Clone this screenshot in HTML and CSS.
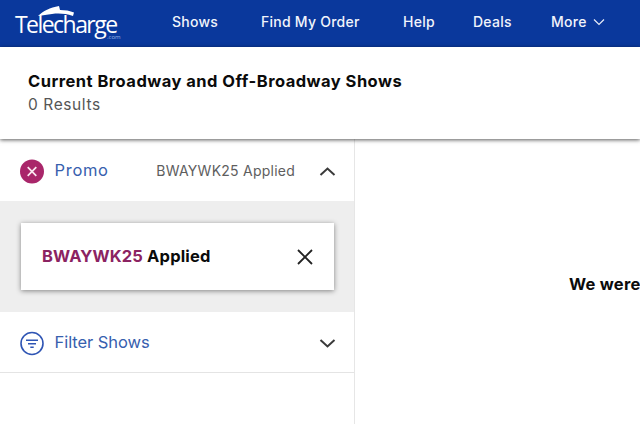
FILE: index.html
```html
<!DOCTYPE html>
<html lang="en">
<head>
<meta charset="utf-8">
<title>Telecharge</title>
<link rel="stylesheet" href="styles.css">
</head>
<body>
<header class="nav">
  <a class="logo">
    <svg class="logo-arc" width="36" height="11" viewBox="0 0 36 11"><path d="M0 10C5 5 12 1.500 21 0l1 4c5 0 10 .8 14 2.500l-1 3.500C27 7.500 21 7 14 8 9 8.500 5 9.500 0 10Z" fill="#fff"/></svg>
    <span class="logo-word">Telecharge</span>
    <span class="logo-com">.com</span>
  </a>
  <nav class="links">
    <span class="link l1">Shows</span>
    <span class="link l2">Find My Order</span>
    <span class="link l3">Help</span>
    <span class="link l4">Deals</span>
    <span class="link l5">More
      <svg width="12" height="8" viewBox="0 0 12 8"><path d="M1 1.500 6 6.500 11 1.500" fill="none" stroke="#e8edf8" stroke-width="1.200"/></svg>
    </span>
  </nav>
</header>
<section class="summary">
  <h1 class="title">Current Broadway and Off-Broadway Shows</h1>
  <p class="count">0 Results</p>
</section>
<div class="content">
  <aside class="side">
    <div class="row">
      <svg class="row-icon" width="25" height="25" viewBox="0 0 25 25"><circle cx="12" cy="12.500" r="12" fill="#a9266a"/><path d="M7.700 8.200 16.300 16.800M16.300 8.200 7.700 16.800" stroke="#fbe9f1" stroke-width="1.700" fill="none"/></svg>
      <span class="row-label label-promo">Promo</span>
      <span class="row-status">BWAYWK25 Applied</span>
      <svg class="chev" width="17" height="11" viewBox="0 0 17 11"><path d="M1.500 9 8.500 2.500 15.500 9" fill="none" stroke="#3a3a3a" stroke-width="2"/></svg>
    </div>
    <div class="panel">
      <div class="card">
        <span class="card-text"><span class="code">BWAYWK25</span> Applied</span>
        <svg width="16" height="16" viewBox="0 0 16 16"><path d="M1 1 15 15M15 1 1 15" stroke="#222" stroke-width="1.800" fill="none"/></svg>
      </div>
    </div>
    <div class="row row-line">
      <svg class="row-icon" width="25" height="25" viewBox="0 0 25 25"><circle cx="12" cy="12.500" r="11" fill="none" stroke="#2f55b4" stroke-width="1.600"/><path d="M6 9.300H18M8 12.800H16M10.300 16.300H13.700" stroke="#2f55b4" stroke-width="1.500" fill="none"/></svg>
      <span class="row-label label-filter">Filter Shows</span>
      <svg class="chev chev-end" width="17" height="11" viewBox="0 0 17 11"><path d="M1.500 2 8.500 8.500 15.500 2" fill="none" stroke="#3a3a3a" stroke-width="2"/></svg>
    </div>
  </aside>
  <main class="main">
    <p class="notice">We were unable to find any shows</p>
  </main>
</div>
</body>
</html>
```
FILE: styles.css
```css
* { box-sizing: border-box; }
html, body { margin: 0; height: 100%; overflow: hidden; background: #fff; }
body { font-family: Inter, "Open Sans", sans-serif; width: 640px; height: 424px; display: flex; flex-direction: column; }

.nav { height: 47px; flex: none; background: #0a389c; display: flex; align-items: center; color: #f1f4fb; }
.logo { position: relative; width: 172px; height: 47px; flex: none; display: block; color: #fff; }
.logo-arc { position: absolute; left: 38px; top: 6px; }
.logo-word { position: absolute; left: 15px; top: 15px; font-family: "Open Sans", sans-serif; font-size: 23px; line-height: 19px; letter-spacing: -1.550px; }
.logo-com { position: absolute; left: 107px; top: 34px; font-family: "Open Sans", sans-serif; font-size: 6px; line-height: 6px; color: #9db4e6; }
.links { display: flex; align-items: center; font-size: 14px; font-weight: 500; line-height: 20px; margin-top: -3px; letter-spacing: .25px; }
.link { display: block; white-space: nowrap; }
.l1 { width: 89px; }
.l2 { width: 142px; }
.l3 { width: 70px; }
.l4 { width: 78px; }
.l5 { display: flex; align-items: center; gap: 6px; }

.summary { height: 92px; flex: none; background: #fff; padding: 23px 28px 0; box-shadow: 0 1px 4px rgba(0,0,0,.65); position: relative; z-index: 1; }
.title { margin: 0; font-size: 16.500px; font-weight: 700; line-height: 22px; color: #0b0b0b; letter-spacing: .47px; }
.count { margin: 3px 0 0; font-size: 15.500px; line-height: 20px; color: #555; letter-spacing: .6px; }

.content { flex: 1; display: flex; min-height: 0; }
.side { width: 355px; flex: none; border-right: 1px solid #e6e6e6; }
.row { height: 62px; display: flex; align-items: center; padding: 2px 18px 0 20px; background: #fff; }
.row-line { height: 61px; border-bottom: 1px solid #e4e4e4; }
.row-icon { flex: none; margin-right: 9.500px; }
.row-label { font-size: 16.500px; line-height: 22px; color: #3760ae; margin-top: -2px; }
.label-promo { letter-spacing: .7px; }
.label-filter { letter-spacing: -.05px; }
.row-status { margin-left: auto; margin-right: 24px; font-size: 14px; line-height: 20px; color: #5e5e5e; letter-spacing: .24px; margin-top: -1px; }
.chev { flex: none; }
.chev-end { margin-left: auto; }

.panel { height: 111px; background: #eeeeee; padding: 22px 20px 22px 21px; }
.card { height: 67px; background: #fff; display: flex; align-items: center; justify-content: space-between; padding: 0 21px 0 21px; box-shadow: 0 1px 5px rgba(0,0,0,.45); }
.card-text { font-size: 16.500px; font-weight: 700; line-height: 22px; color: #0b0b0b; margin-top: -2px; letter-spacing: .15px; }
.code { color: #8b2362; }

.main { flex: 1; min-width: 0; overflow: hidden; padding: 134px 0 0 214px; }
.notice { margin: 0; font-size: 16.500px; font-weight: 700; line-height: 22px; color: #0b0b0b; white-space: nowrap; letter-spacing: .25px; }
```
